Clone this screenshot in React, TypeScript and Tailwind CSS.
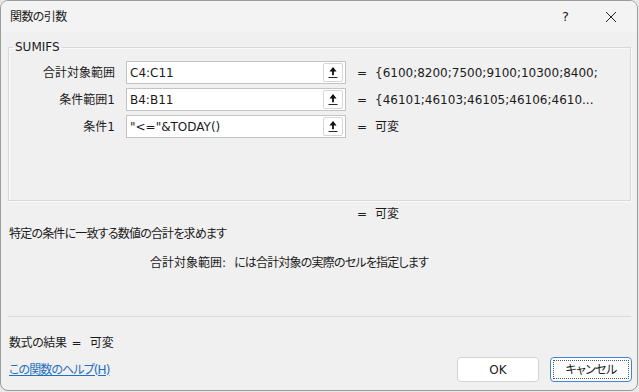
import type { ReactNode } from 'react'

type ArgRow = {
  label: string
  input: string
  value: string
}

const rows: ArgRow[] = [
  { label: '合計対象範囲', input: 'C4:C11', value: '{6100;8200;7500;9100;10300;8400;' },
  { label: '条件範囲1', input: 'B4:B11', value: '{46101;46103;46105;46106;4610...' },
  { label: '条件1', input: '"<="&TODAY()', value: '可変' }
]

const CollapseIcon = () => (
  <svg width="20" height="19" viewBox="0 0 20 19" className="block">
    <path d="M10 3.5 L14 8.5 L11 8.5 L11 12.5 L9 12.5 L9 8.5 L6 8.5 Z" fill="#111" />
    <rect x="5" y="14.5" width="10" height="1" fill="#111" />
  </svg>
)

const Row = ({ label, input, value }: ArgRow) => (
  <div className="flex h-[23px] items-center">
    <span className="w-[106px] shrink-0 text-right">{label}</span>
    <div className="ml-[11px] flex h-[23px] w-[220px] shrink-0 items-center border border-[#c4c4c4] bg-white pl-[3px]">
      <span className="flex-1 truncate">{input}</span>
      <div className="mr-[2px] flex h-[19px] w-[20px] items-center justify-center rounded-[2px] border border-[#d6d6d6] bg-white">
        <CollapseIcon />
      </div>
    </div>
    <span className="ml-[11px] w-[18px] shrink-0">=</span>
    <span className="truncate whitespace-nowrap">{value}</span>
  </div>
)

const Btn = ({ children, focused }: { children: ReactNode; focused?: boolean }) => (
  <button
    className={
      focused
        ? 'flex h-[25px] w-[82px] items-center justify-center rounded-[4px] border border-[#3d86d6] bg-white p-[2px]'
        : 'flex h-[25px] w-[82px] items-center justify-center rounded-[4px] border border-[#d3d3d3] bg-white'
    }
  >
    {focused ? (
      <span className="flex h-full w-full items-center justify-center border border-dotted border-[#555] tracking-[-0.6px]">
        {children}
      </span>
    ) : (
      children
    )}
  </button>
)

export default function App() {
  return (
    <div className="h-[392px] w-[639px] bg-[#e9e9e9]">
      <div className="flex h-[391px] w-[638px] flex-col overflow-hidden rounded-[8px] border border-[#9c9c9c] bg-[#f0f0f0] font-['DejaVu_Sans','Noto_Sans_CJK_JP',sans-serif] text-[12px] leading-[16px] text-[#1b1b1b] [font-feature-settings:'palt']">
        {/* title bar */}
        <div className="flex h-[31px] shrink-0 items-center bg-[#f3f3f3] pl-[9px]">
          <span className="tracking-[-0.6px]">関数の引数</span>
          <span className="ml-auto mr-[36px] text-[13px]">?</span>
          <svg width="12" height="12" viewBox="0 0 12 12" className="mr-[20px]">
            <path d="M1 1 L11 11 M11 1 L1 11" stroke="#222" strokeWidth="1" />
          </svg>
        </div>

        <div className="flex flex-1 flex-col pl-[7px] pr-[6px] pt-[6px]">
          <fieldset className="h-[163px] border border-[#d9d9d9] shadow-[inset_1px_1px_0_#fafafa,1px_1px_0_#fafafa]">
            <legend className="ml-[4px] px-[2px] leading-[18px]">SUMIFS</legend>
            <div className="flex flex-col gap-[4px] pt-[5px]">
              {rows.map((r) => (
                <Row key={r.label} {...r} />
              ))}
            </div>
          </fieldset>

          <div className="mt-[5px] flex pl-[349px]">
            <span className="w-[18px]">=</span>
            <span>可変</span>
          </div>

          <p className="mt-[4px] pl-[1px] tracking-[-0.8px]">特定の条件に一致する数値の合計を求めます</p>

          <p className="mt-[13px] pl-[142px]">
            合計対象範囲:
            <span className="ml-[8px] tracking-[-0.8px]">には合計対象の実際のセルを指定します</span>
          </p>

          <div className="mt-[45px] h-px bg-[#dadada]" />

          <div className="mt-[18px] flex pl-[1px]">
            <span className="tracking-[-0.4px]">数式の結果</span>
            <span className="ml-[5px]">=</span>
            <span className="ml-[8px]">可変</span>
          </div>

          <div className="mt-[6px] flex h-[25px] items-center pl-[1px]">
            <a href="#" className="tracking-[-0.9px] text-[#1f6fc2] underline">
              この関数のヘルプ(H)
            </a>
            <div className="ml-auto mr-[-1px] flex gap-[11px]">
              <Btn>OK</Btn>
              <Btn focused>キャンセル</Btn>
            </div>
          </div>
        </div>
      </div>
    </div>
  )
}
